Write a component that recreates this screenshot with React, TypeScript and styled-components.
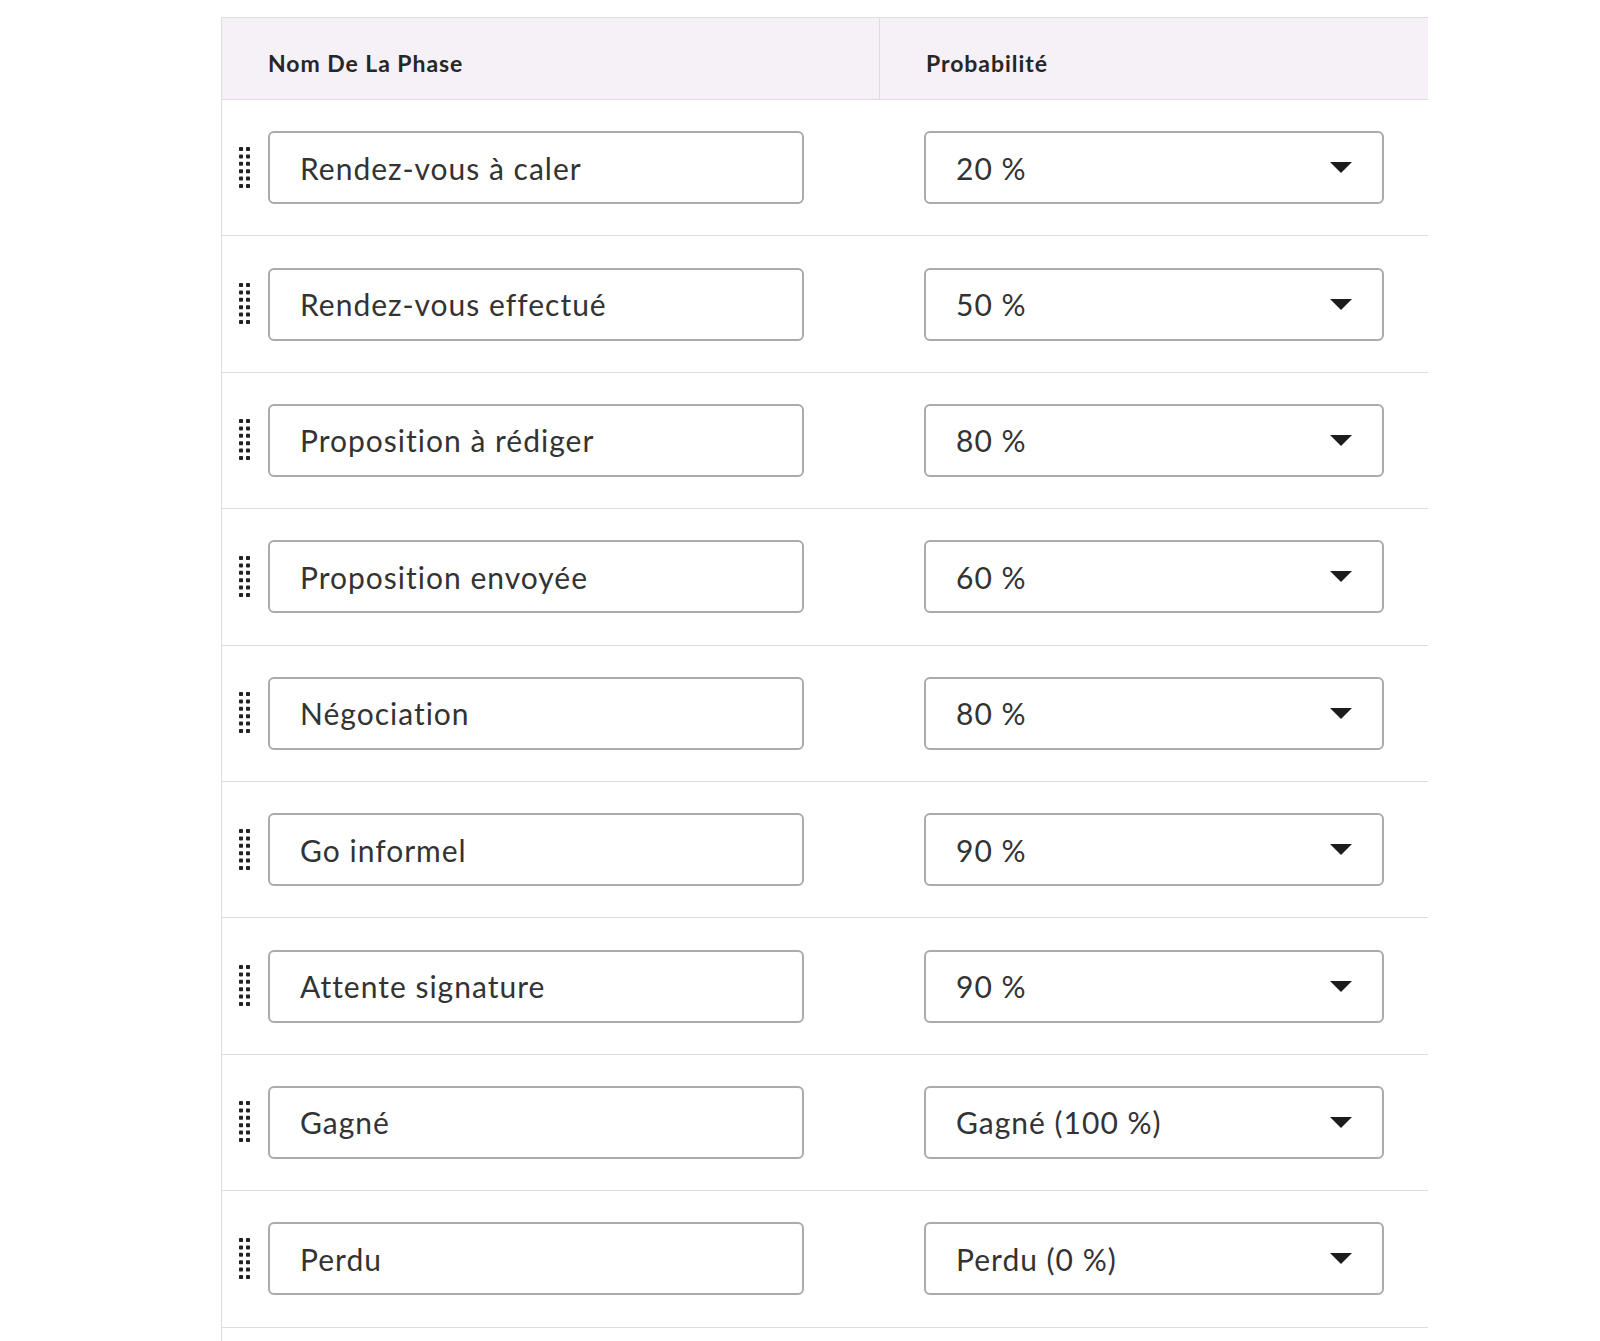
import styled, { createGlobalStyle } from "styled-components";

const GlobalStyle = createGlobalStyle`
  body {
    margin: 0;
    background: #ffffff;
    font-family: "Lato", "Noto Sans", sans-serif;
    color: #333333;
  }
`;

const Page = styled.div`
  padding: 17px 0 0 221px;
  height: 1341px;
  box-sizing: border-box;
  overflow: hidden;
`;

const Table = styled.div`
  width: 1206px;
  border-left: 1px solid #dddddd;
  min-height: 1400px;
`;

const HeaderRow = styled.div`
  display: grid;
  grid-template-columns: 658px 1fr;
  height: 83px;
  box-sizing: border-box;
  background: #f5f1f7;
  border-top: 1px solid #dddddd;
  border-bottom: 1px solid #dddddd;
`;

const HeaderCell = styled.div<{ $divider?: boolean }>`
  display: flex;
  align-items: center;
  padding: 8px 0 0 46px;
  font-size: 23px;
  font-weight: 700;
  letter-spacing: 0.95px;
  color: #262626;
  border-right: ${(p) => (p.$divider ? "1px solid #dddddd" : "none")};
`;

const Row = styled.div`
  display: grid;
  grid-template-columns: 658px 1fr;
  height: 136.4px;
  box-sizing: border-box;
  border-bottom: 1px solid #dddddd;
`;

const NameCell = styled.div`
  display: flex;
  align-items: center;
  padding-left: 17px;
  gap: 18px;
`;

const ValueCell = styled.div`
  display: flex;
  align-items: center;
  padding-left: 44px;
`;

const Handle = styled.svg`
  flex: none;
  cursor: grab;
`;

const NameInput = styled.input`
  width: 536px;
  height: 73px;
  box-sizing: border-box;
  border: 2px solid #ababab;
  border-radius: 6px;
  padding: 0 0 0 30px;
  font-family: inherit;
  font-size: 30px;
  letter-spacing: 1px;
  color: #333333;
  background: #ffffff;
  outline: none;
`;

const SelectBox = styled.div`
  width: 460px;
  height: 73px;
  box-sizing: border-box;
  border: 2px solid #ababab;
  border-radius: 6px;
  padding: 0 30px 0 30px;
  display: flex;
  align-items: center;
  justify-content: space-between;
  font-size: 30px;
  letter-spacing: 1px;
  color: #333333;
  cursor: pointer;
`;

const phases = [
  { name: "Rendez-vous à caler", probability: "20 %" },
  { name: "Rendez-vous effectué", probability: "50 %" },
  { name: "Proposition à rédiger", probability: "80 %" },
  { name: "Proposition envoyée", probability: "60 %" },
  { name: "Négociation", probability: "80 %" },
  { name: "Go informel", probability: "90 %" },
  { name: "Attente signature", probability: "90 %" },
  { name: "Gagné", probability: "Gagné (100 %)" },
  { name: "Perdu", probability: "Perdu (0 %)" },
];

const DragHandle = () => (
  <Handle width="11" height="42" viewBox="0 0 11 42">
    {[0, 1, 2, 3, 4, 5].map((r) =>
      [0, 7].map((x) => (
        <rect key={`${r}-${x}`} x={x} y={r * 7.4} width="4" height="4" rx="0.8" fill="#222" />
      ))
    )}
  </Handle>
);

const Caret = () => (
  <svg width="22" height="11" viewBox="0 0 22 11">
    <path d="M0 0 L22 0 L11 11 Z" fill="#1c1c1c" />
  </svg>
);

const App = () => {
  return (
    <Page>
      <GlobalStyle />
      <Table>
        <HeaderRow>
          <HeaderCell $divider>Nom De La Phase</HeaderCell>
          <HeaderCell>Probabilité</HeaderCell>
        </HeaderRow>
        {phases.map((phase) => (
          <Row key={phase.name}>
            <NameCell>
              <DragHandle />
              <NameInput defaultValue={phase.name} />
            </NameCell>
            <ValueCell>
              <SelectBox>
                <span>{phase.probability}</span>
                <Caret />
              </SelectBox>
            </ValueCell>
          </Row>
        ))}
      </Table>
    </Page>
  );
};

export default App;
